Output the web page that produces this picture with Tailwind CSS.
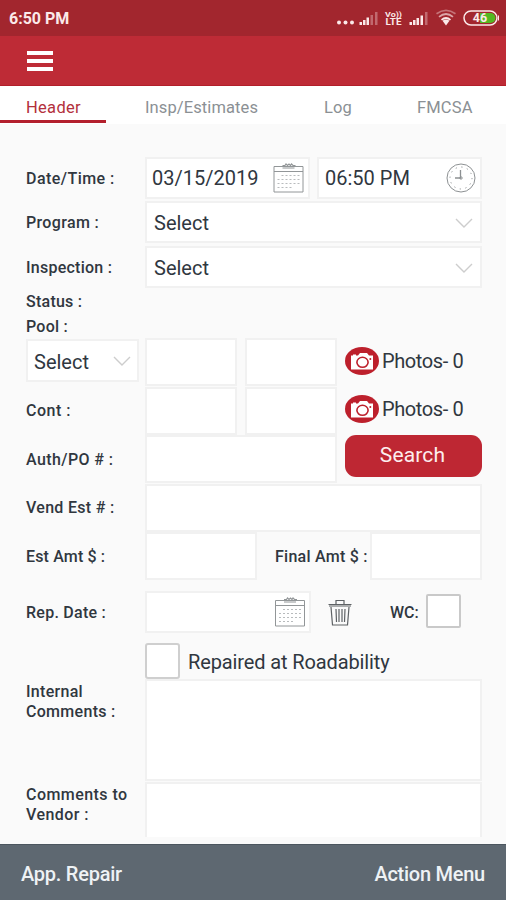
<!DOCTYPE html>
<html lang="en">
<head>
<meta charset="utf-8">
<meta name="viewport" content="width=device-width, initial-scale=1">
<title>Header</title>
<script src="https://cdn.jsdelivr.net/npm/@tailwindcss/browser@4"></script>
</head>
<body class="w-[506px] h-[900px] overflow-hidden bg-[#fafafa] font-['Roboto',sans-serif] text-[#30373f]">
<svg class="hidden">
  <symbol id="cal" viewBox="0 0 30 30">
    <g fill="none" stroke="#929698" stroke-width="1">
      <path d="M.5 3.500h29v25.500H.500zM.500 8.500h29"/>
      <path d="M9 2.500h2.500l1-1.500 1.500 1.500 1.500-1.500 1.500 1.500 1-1.500 1.500 1.500H22M9 5h12" stroke-width="1.200"/>
      <path d="M8 12.500h18M4 16.500h22M4 20.500h22M4 24.500h16" stroke-dasharray="2 2" stroke="#b8bbbd"/>
    </g>
  </symbol>
  <symbol id="chev" viewBox="0 0 18 11"><path d="M1 1l8 8 8-8" fill="none" stroke="#cdcdcd" stroke-width="1.400"/></symbol>
  <symbol id="cam" viewBox="0 0 34 28">
    <ellipse cx="17" cy="14" rx="17" ry="14" fill="#bd202c"/>
    <path d="M6 8.500h2V7.500h3v1h2l2-2.500h7l2 2.500h4v14H6z" fill="#fff"/>
    <ellipse cx="17.500" cy="15.300" rx="5.600" ry="5" fill="none" stroke="#bd202c" stroke-width="1.600"/>
    <circle cx="25.300" cy="12" r="1" fill="#bd202c"/>
  </symbol>
</svg>

<div class="flex flex-col w-[506px] h-[900px]">
  <header class="shrink-0">
    <div class="h-[36px] bg-[#a2262e] flex items-center pl-[9px] pr-[7px] text-[#fbe9e9]">
      <span class="text-[16px] font-bold leading-[20px] pt-[2px]">6:50 PM</span>
      <svg class="ml-auto" width="162" height="36" viewBox="338 0 162 36" fill="#fbe9e9">
        <circle cx="340" cy="22.500" r="2"/><circle cx="346.500" cy="22.500" r="2"/><circle cx="353" cy="22.500" r="2"/>
        <path d="M360.500 22h2.500v3h-2.500zM364 20h2.500v5H364zM367.500 17.500h2.500V25h-2.500z"/>
        <path d="M371.500 15h2.500v10h-2.500zM376 12h2.500v13H376z" opacity=".35"/>
        <g font-family="Roboto" font-weight="700"><text x="386" y="16.800" textLength="17" lengthAdjust="spacingAndGlyphs" font-size="7">Vo))</text><text x="386.500" y="25" textLength="16" lengthAdjust="spacingAndGlyphs" font-size="8.500">LTE</text></g>
        <path d="M410.500 22h2.500v3h-2.500zM414 20h2.500v5H414zM417.500 18h2.500v7h-2.500zM421.500 15.500h2.500V25h-2.500z"/>
        <path d="M426 12h2.500v13H426z" opacity=".35"/>
        <g fill="none" stroke="#fbe9e9" stroke-width="1.700"><path d="M442.500 19.800q4.500-3.600 9 0"/><path d="M440 16.800q7-5.600 14 0" opacity=".65"/><path d="M437.500 13.800q9.500-6.800 19 0" opacity=".4"/></g>
        <path d="M443.500 20.800q3.500-2.400 7 0l-3.500 4.700z"/>
        <rect x="465" y="11" width="33" height="14" rx="7" fill="#a2262e" stroke="#fbe9e9" stroke-width="1.500"/>
        <path d="M481 13h10.500a5 5 0 0 1 0 10H481z" fill="#53b821"/>
        <path d="M499.500 15.500v5" stroke="#fbe9e9"/>
        <text x="481" y="22.300" text-anchor="middle" font-family="Roboto" font-weight="700" font-size="12.500">46</text>
      </svg>
    </div>
    <div class="h-[50px] bg-[#be2b36] border-b border-[#b21f2a] flex items-center pl-[27px]">
      <div class="flex flex-col gap-[4px] w-[26px]"><i class="h-[4px] bg-white"></i><i class="h-[4px] bg-white"></i><i class="h-[4px] bg-white"></i></div>
    </div>
    <nav class="h-[38px] bg-white flex text-[16.500px] leading-[20px] text-[#8b9094]">
      <div class="w-[106px] h-[37px] pt-[12px] pl-[26px] border-b-[3px] border-[#b3202d] text-[#b3303c] tracking-[0.300px]">Header</div>
      <div class="pt-[12px] pl-[39px] w-[218px] tracking-[0.100px]">Insp/Estimates</div>
      <div class="pt-[12px] w-[93px] tracking-[0.100px]">Log</div>
      <div class="pt-[12px] tracking-[0.150px]">FMCSA</div>
    </nav>
  </header>

  <main class="flex-1 min-h-0 overflow-hidden pl-[26px] pr-[24px] pt-[33px] text-[20px]">
    <div class="flex h-[42px]">
      <label class="w-[119px] text-[16px] font-medium tracking-[0.450px] leading-[43px]">Date/Time :</label>
      <div class="w-[165px] h-[42px] bg-white border-2 border-[#f1f1f1] flex items-center justify-between pl-[5px] pr-[4px]"><span>03/15/2019</span><svg class="w-[31px] h-[30px]"><use href="#cal"/></svg></div>
      <div class="ml-[7px] w-[165px] h-[42px] bg-white border-2 border-[#f1f1f1] flex items-center justify-between pl-[6px] pr-[4px]"><span>06:50 PM</span>
        <svg width="30" height="30" viewBox="0 0 30 30" fill="none" stroke="#8d9193"><circle cx="15" cy="15" r="14"/><path d="M14.500 7v8H9" stroke-width="1.300"/><circle cx="15" cy="15" r="1.200"/><circle cx="15" cy="15" r="11" stroke-dasharray="1.200 4.560"/></svg>
      </div>
    </div>
    <div class="flex h-[42px] mt-[2px]">
      <label class="w-[119px] text-[16px] font-medium tracking-[0.350px] leading-[43px]">Program :</label>
      <div class="flex-1 bg-white border-2 border-[#f1f1f1] flex items-center justify-between pt-[2px] pl-[7px] pr-[7px]"><span>Select</span><svg class="w-[18px] h-[11px]"><use href="#chev"/></svg></div>
    </div>
    <div class="flex h-[42px] mt-[3px]">
      <label class="w-[119px] text-[16px] font-medium tracking-[0.250px] leading-[43px]">Inspection :</label>
      <div class="flex-1 bg-white border-2 border-[#f1f1f1] flex items-center justify-between pt-[2px] pl-[7px] pr-[7px]"><span>Select</span><svg class="w-[18px] h-[11px]"><use href="#chev"/></svg></div>
    </div>
    <div class="mt-px h-[49px] text-[16px] font-medium tracking-[0.250px] leading-[25px]">Status :<br>Pool :</div>
    <div class="flex h-[48px]">
      <div class="w-[113px] h-[43px] mt-[1px] mr-[6px] bg-white border-2 border-[#f1f1f1] flex items-center justify-between pt-[2px] pl-[6px] pr-[6px]"><span>Select</span><svg class="w-[18px] h-[11px]"><use href="#chev"/></svg></div>
      <div class="w-[92px] bg-white border-2 border-[#f1f1f1]"></div>
      <div class="ml-[8px] w-[92px] bg-white border-2 border-[#f1f1f1]"></div>
      <div class="ml-[8px] flex items-center gap-[3px] -mt-[3px] tracking-[-0.400px]"><svg class="w-[34px] h-[28px]"><use href="#cam"/></svg><span>Photos- 0</span></div>
    </div>
    <div class="flex h-[48px] mt-px">
      <label class="w-[119px] text-[16px] font-medium tracking-[0.500px] leading-[48px]">Cont :</label>
      <div class="w-[92px] bg-white border-2 border-[#f1f1f1]"></div>
      <div class="ml-[8px] w-[92px] bg-white border-2 border-[#f1f1f1]"></div>
      <div class="ml-[8px] flex items-center gap-[3px] -mt-[4px] tracking-[-0.400px]"><svg class="w-[34px] h-[28px]"><use href="#cam"/></svg><span>Photos- 0</span></div>
    </div>
    <div class="flex h-[48px]">
      <label class="w-[119px] text-[16px] font-medium tracking-[0.400px] leading-[50px]">Auth/PO # :</label>
      <div class="w-[192px] bg-white border-2 border-[#f1f1f1]"></div>
      <button class="ml-[8px] w-[137px] h-[42px] rounded-[11px] bg-[#be2733] text-[#fdeeee] text-[21px] tracking-[0.150px] pr-[2px]">Search</button>
    </div>
    <div class="flex h-[48px] mt-px">
      <label class="w-[119px] text-[16px] font-medium tracking-[0.300px] leading-[48px]">Vend Est # :</label>
      <div class="flex-1 bg-white border-2 border-[#f1f1f1]"></div>
    </div>
    <div class="flex h-[48px]">
      <label class="w-[119px] text-[16px] font-medium tracking-[0.150px] leading-[50px]">Est Amt $ :</label>
      <div class="w-[112px] bg-white border-2 border-[#f1f1f1]"></div>
      <label class="w-[113px] pl-[18px] text-[16px] font-medium tracking-[0.250px] leading-[50px] whitespace-nowrap">Final Amt $ :</label>
      <div class="flex-1 bg-white border-2 border-[#f1f1f1]"></div>
    </div>
    <div class="flex h-[42px] mt-[11px]">
      <label class="w-[119px] text-[16px] font-medium tracking-[0.250px] leading-[44px]">Rep. Date :</label>
      <div class="w-[166px] bg-white border-2 border-[#f1f1f1] flex items-center justify-end pr-[4px]"><svg class="w-[30px] h-[30px]"><use href="#cal"/></svg></div>
      <svg class="ml-[17px] mt-[8px]" width="24" height="27" viewBox="0 0 24 27" fill="none" stroke="#5e6265" stroke-width="1.200"><path d="M.5 5.500h23M1 7h22M8 5V1.500h8V5M3 8l1.500 18h15L21 8M8 10l.5 13M11 10v13M14 10v13M17 10l-.5 13"/></svg>
      <label class="ml-[38px] w-[36px] text-[16px] font-medium leading-[43px]">WC:</label>
      <div class="mt-[3px] w-[35px] h-[34px] border-2 border-[#c9c9c9] rounded-[2px] bg-white"></div>
    </div>
    <div class="flex h-[36px] mt-[10px] ml-[119px]">
      <div class="w-[35px] h-[36px] border-2 border-[#cfcfcf] rounded-[3px] bg-white"></div>
      <span class="ml-[8px] leading-[38px] tracking-[-0.120px]">Repaired at Roadability</span>
    </div>
    <div class="flex h-[102px]">
      <label class="w-[119px] pt-[3px] text-[16px] font-medium tracking-[0.300px] leading-[20px]">Internal<br>Comments :</label>
      <div class="flex-1 bg-white border-2 border-[#f1f1f1]"></div>
    </div>
    <div class="flex h-[55px] mt-px">
      <label class="w-[119px] pt-[3px] text-[16px] font-medium tracking-[0.450px] leading-[20px]">Comments to<br>Vendor :</label>
      <div class="flex-1 bg-white border-2 border-b-0 border-[#f1f1f1]"></div>
    </div>
  </main>

  <footer class="shrink-0 h-[56px] bg-[#5e6871] border-t border-[#4c565f] flex items-center justify-between px-[21px] pt-[2px] text-[#eef2f5] text-[20px] font-medium tracking-[-0.250px]"><span>App. Repair</span><span>Action Menu</span></footer>
</div>
</body>
</html>
